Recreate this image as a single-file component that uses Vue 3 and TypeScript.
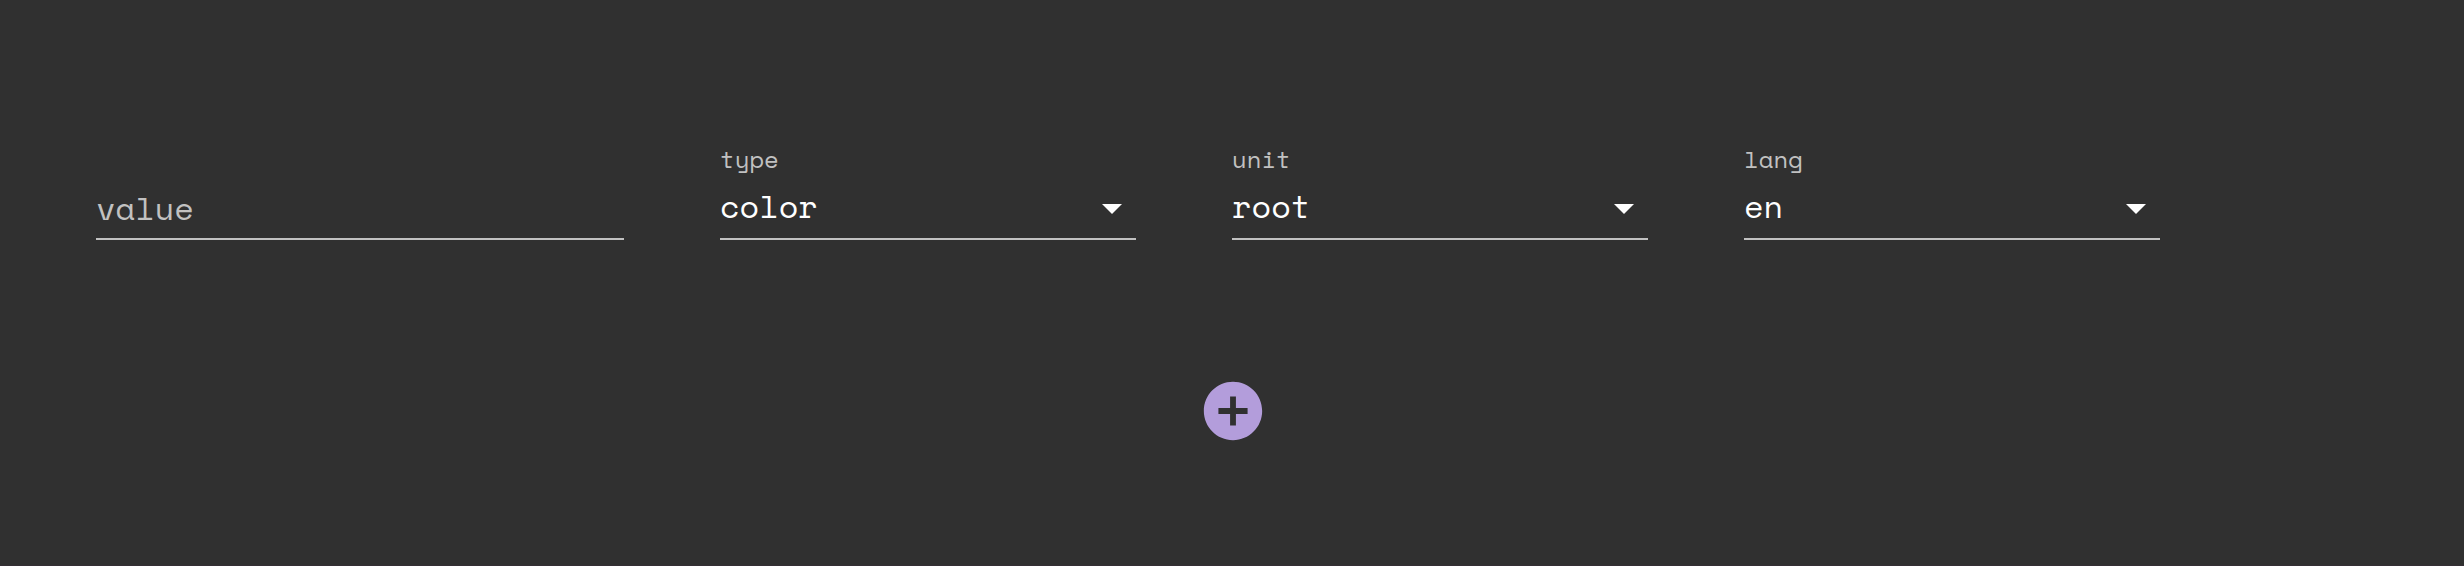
<script setup lang="ts">
import { ref } from 'vue'

interface SelectField {
  label: string
  value: string
}

const selects = ref<SelectField[]>([
  { label: 'type', value: 'color' },
  { label: 'unit', value: 'root' },
  { label: 'lang', value: 'en' },
])
</script>

<template>
  <main class="panel">
    <form class="fields" @submit.prevent>
      <div class="field field-input">
        <span class="placeholder">value</span>
      </div>
      <div v-for="field in selects" :key="field.label" class="field">
        <span class="label">{{ field.label }}</span>
        <div class="selected">
          <span class="text">{{ field.value }}</span>
          <svg class="arrow" viewBox="0 0 20 10"><path d="M0 0h20L10 10z" /></svg>
        </div>
      </div>
    </form>
    <button class="add" type="button" aria-label="add">
      <svg viewBox="0 0 24 24">
        <path d="M12 2C6.48 2 2 6.48 2 12s4.48 10 10 10 10-4.48 10-10S17.52 2 12 2zm5 11h-4v4h-2v-4H7v-2h4V7h2v4h4v2z" />
      </svg>
    </button>
  </main>
</template>

<style>
body {
  margin: 0;
  background: #303030;
}
</style>

<style scoped>
.panel {
  box-sizing: border-box;
  height: 566px;
  padding: 140px 96px 0;
  border-bottom: 1px solid #352f35;
  background: #303030;
  color: #fff;
  font-family: "Space Mono", "Liberation Mono", monospace;
}
.fields {
  display: flex;
  gap: 96px;
}
.field {
  box-sizing: border-box;
  width: 416px;
  height: 100px;
  display: flex;
  flex-direction: column;
  border-bottom: 2px solid #c1c1c1;
}
.field-input {
  width: 528px;
}
.label {
  height: 40px;
  line-height: 38px;
  font-size: 24px;
  color: #c1c1c1;
}
.selected {
  height: 48px;
  display: flex;
  justify-content: space-between;
}
.text,
.placeholder {
  font-size: 32px;
  line-height: 52px;
}
.placeholder {
  margin-top: 42px;
  color: #c1c1c1;
}
.arrow {
  width: 20px;
  height: 10px;
  margin: 24px 14px 0 0;
  fill: #fff;
}
.add {
  display: block;
  width: 70px;
  height: 70px;
  margin: 136px 0 0 1102px;
  padding: 0;
  border: 0;
  background: none;
  cursor: pointer;
}
.add svg {
  display: block;
  width: 70px;
  height: 70px;
  fill: #b39ddb;
}
</style>
